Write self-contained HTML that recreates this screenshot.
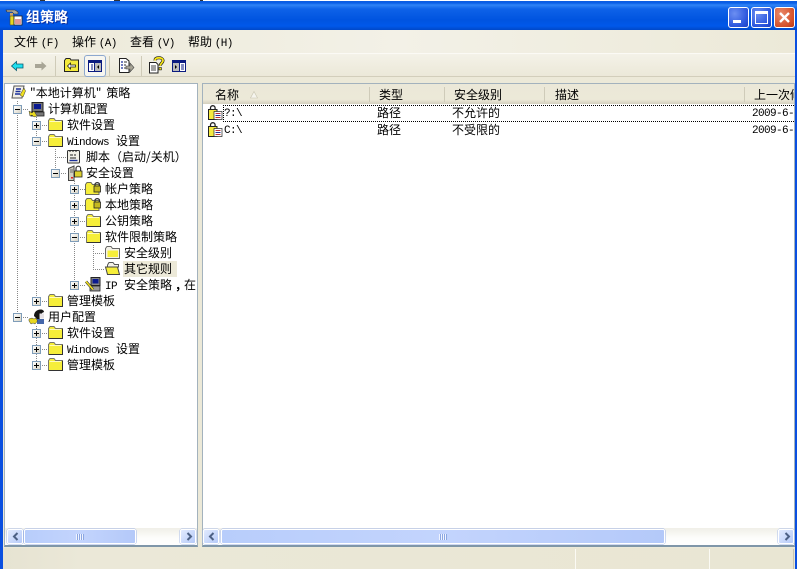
<!DOCTYPE html>
<html><head><meta charset="utf-8">
<style>
html,body{margin:0;padding:0;width:798px;height:569px;overflow:hidden;background:#fff}
*{box-sizing:border-box}
body{position:relative;font:12px/16px "WenQuanYi Zen Hei","Noto Sans CJK SC","Liberation Sans",sans-serif;color:#000;-webkit-font-smoothing:none}
.a{position:absolute}
.t{position:absolute;white-space:nowrap;height:16px;line-height:16px;font-size:12px}
.m{font-family:"Liberation Mono","WenQuanYi Zen Hei",monospace;font-size:11px;letter-spacing:-.6px}
svg{position:absolute;display:block;overflow:visible}
.pm{position:absolute;width:9px;height:9px;border:1px solid #7f9db9;background:linear-gradient(135deg,#fff,#d8d4c6);}
.pm:before{content:"";position:absolute;left:1px;top:3px;width:5px;height:1px;background:#000}
.pm.p:after{content:"";position:absolute;left:3px;top:1px;width:1px;height:5px;background:#000}
.v{position:absolute;width:1px;background:repeating-linear-gradient(to bottom,#888 0 1px,transparent 1px 2px)}
.h{position:absolute;height:1px;background:repeating-linear-gradient(to right,#888 0 1px,transparent 1px 2px)}
.hs{position:absolute;width:1px;top:87px;height:15px;background:#cfcbb9}
.sb{position:absolute;height:17px;background:linear-gradient(#f0efe8,#fdfdfb 60%,#fefefe)}
.btn{position:absolute;top:1px;width:16px;height:15px;background:linear-gradient(135deg,#e1eafe,#b6caf8);border:1px solid #fff;border-radius:2px;box-shadow:0 0 0 .5px #a9bde8}
.th{position:absolute;top:1px;height:15px;background:linear-gradient(90deg,#b8cdfb,#c3d4fd 50%,#b4c9f9);border:1px solid #fff;border-radius:2px;box-shadow:0 0 0 .5px #9db3e6}
.grip{position:absolute;top:4px;width:8px;height:6px;background:repeating-linear-gradient(to right,#f0f4ff 0 1px,#8ca7e2 1px 2px)}
.wb{position:absolute;top:7px;width:21px;height:21px;border:1px solid #fff;border-radius:3px}
</style></head>
<body>
<!-- frame -->
<div class="a" style="left:0;top:1px;width:797px;height:29px;background:linear-gradient(#0a5be0 0,#0a5fe8 2px,#2f83f5 4px,#0e62e8 8px,#0054e0 19px,#0058ea 25px,#0048c8 29px)"></div>
<div class="a" style="left:40px;top:0;width:5px;height:1px;background:#333"></div>
<div class="a" style="left:114px;top:0;width:6px;height:1px;background:#333"></div>
<div class="a" style="left:200px;top:0;width:3px;height:1px;background:#333"></div>
<div class="a" style="left:0;top:30px;width:3px;height:539px;background:#0a4fe0"></div>
<div class="a" style="left:795px;top:30px;width:2px;height:539px;background:#0a4fe0"></div>

<!-- title icon -->
<svg style="left:6px;top:9px" width="18" height="17" viewBox="0 0 18 17">
<path d="M0 1h9l3 2v2H8L6 3H1z" fill="#a8a8a0" stroke="#333" stroke-width=".6"/>
<rect x="4" y="4" width="3" height="6" fill="#caa46a"/>
<rect x="4" y="7" width="4" height="9" fill="#e8d820" stroke="#444" stroke-width=".6"/>
<rect x="8" y="7" width="8" height="9" fill="#fff" stroke="#222" stroke-width=".8"/>
<path d="M10 10v5M12 10v5M14 10v5" stroke="#c03030" stroke-width="1"/>
</svg>
<div class="t" style="left:26px;top:9px;color:#fff;font-weight:bold;font-size:14px;text-shadow:1px 1px 0 #0a2fa0">组策略</div>

<!-- window buttons -->
<div class="wb" style="left:728px;background:radial-gradient(circle at 30% 30%,#6c8ff2,#2a55dc 70%,#1d3fc0)">
  <div class="a" style="left:4px;top:12px;width:8px;height:3px;background:#fff"></div>
</div>
<div class="wb" style="left:751px;background:radial-gradient(circle at 30% 30%,#6c8ff2,#2a55dc 70%,#1d3fc0)">
  <div class="a" style="left:3px;top:3px;width:13px;height:13px;border:1px solid #fff;border-top:3px solid #fff"></div>
</div>
<div class="wb" style="left:774px;background:radial-gradient(circle at 30% 30%,#ea8a6a,#d4502a 70%,#b83a1a)">
  <svg style="left:3px;top:3px" width="13" height="13" viewBox="0 0 13 13"><path d="M2 2l9 9M11 2l-9 9" stroke="#fff" stroke-width="2.4"/></svg>
</div>

<!-- menu -->
<div class="a" style="left:3px;top:30px;width:792px;height:23px;background:linear-gradient(90deg,#ece9d8,#f3f1e7 50%,#ece9d8)"></div>
<div class="a" style="left:3px;top:53px;width:792px;height:1px;background:#fbfaf5"></div>
<div class="t" style="left:14px;top:34px">文件 <span class="m">(F)</span></div>
<div class="t" style="left:72px;top:34px">操作 <span class="m">(A)</span></div>
<div class="t" style="left:130px;top:34px">查看 <span class="m">(V)</span></div>
<div class="t" style="left:188px;top:34px">帮助 <span class="m">(H)</span></div>

<!-- toolbar -->
<div class="a" style="left:3px;top:54px;width:792px;height:23px;background:linear-gradient(#f4f2e8,#ebe8d8)"></div>
<div class="a" style="left:3px;top:76px;width:792px;height:1px;background:#d2cebb"></div>
<div class="a" style="left:55px;top:56px;width:1px;height:20px;background:#cfcbb8"></div>
<div class="a" style="left:141px;top:56px;width:1px;height:20px;background:#cfcbb8"></div>
<div class="a" style="left:109px;top:56px;width:1px;height:20px;background:#cfcbb8"></div>
<svg style="left:11px;top:60px" width="13" height="12" viewBox="0 0 13 12"><path d="M.5 6L5.5 1.500V4H12V8H5.500v2.500z" fill="#1fe0ee" stroke="#0a5a70" stroke-width=".8"/></svg>
<svg style="left:34px;top:60px" width="13" height="12" viewBox="0 0 13 12"><path d="M12.500 6L7.500 1.500V4H1V8H7.500v2.500z" fill="#a8a596"/></svg>
<svg style="left:64px;top:57px" width="15" height="16" viewBox="0 0 15 16"><path d="M.5 3.500L2 1.500H6L7 3H14.500V14.500H.5z" fill="#f4ea3c" stroke="#222"/><path d="M3.500 9L6.500 6v2h5v2H6.500v2z" fill="#fff" stroke="#111" stroke-width=".7"/></svg>
<div class="a" style="left:84px;top:55px;width:22px;height:22px;border:1px solid #8da8cf;border-radius:3px;background:#f7f6f0"></div>
<svg style="left:88px;top:60px" width="14" height="12" viewBox="0 0 14 12"><rect x=".5" y=".5" width="13" height="11" fill="#fff" stroke="#0a1a80"/><rect x="1" y="1" width="12" height="2" fill="#0a1a80"/><rect x="7" y="3" width="6" height="8" fill="#bbb"/><path d="M6.500 1v10" stroke="#0a1a80"/><path d="M3 5h2M3 7h2M3 9h2" stroke="#0a1a80"/><path d="M11 5v4L9 7z" fill="#000"/></svg>
<svg style="left:119px;top:58px" width="15" height="16" viewBox="0 0 15 16"><path d="M.5.5H7L10 3V14.500H.5z" fill="#fff" stroke="#222"/><path d="M2 4h2M2 7h2M2 10h2" stroke="#1a2f9a" stroke-width="1.200"/><path d="M5 4h3M5 7h2M5 10h2" stroke="#333"/><path d="M7 8h4V5l4 4.500-4 4.500v-3H7z" fill="#a8a596" stroke="#444" stroke-width=".6"/></svg>
<svg style="left:149px;top:57px" width="15" height="17" viewBox="0 0 15 17"><path d="M.5 5.500H7L9 7.500V16H.5z" fill="#fff" stroke="#222"/><path d="M2 9h5M2 11h5M2 13h5" stroke="#444"/><path d="M6 3.500C6 1.500 7.800.8 10 .8s4 1 4 3c0 2-2.800 2.500-2.800 5" fill="none" stroke="#111" stroke-width="3"/><path d="M6 3.500C6 1.500 7.800.8 10 .8s4 1 4 3c0 2-2.800 2.500-2.800 5" fill="none" stroke="#f6e51a" stroke-width="1.800"/><rect x="10" y="10.500" width="2.400" height="2.400" fill="#f6e51a" stroke="#111" stroke-width=".6"/></svg>
<svg style="left:172px;top:60px" width="14" height="12" viewBox="0 0 14 12"><rect x=".5" y=".5" width="13" height="11" fill="#fff" stroke="#0a1a80"/><rect x="1" y="1" width="12" height="2" fill="#0a1a80"/><rect x="1" y="3" width="6" height="8" fill="#bbb"/><path d="M7.500 1v10" stroke="#0a1a80"/><path d="M9 5h3M9 7h3M9 9h3" stroke="#0a1a80"/><path d="M3 5v4l2-2z" fill="#000"/></svg>

<!-- pane area -->
<div class="a" style="left:3px;top:77px;width:792px;height:471px;background:#ece9d8"></div>
<div class="a" style="left:4px;top:83px;width:194px;height:464px;background:#fff;border:1px solid #a3b2bd;border-bottom:2px solid #7f96a8"></div>
<div class="a" style="left:202px;top:83px;width:593px;height:464px;background:#fff;border:1px solid #a3b2bd;border-bottom:2px solid #7f96a8"></div>

<!-- list header -->
<div class="a" style="left:203px;top:84px;width:591px;height:20px;background:linear-gradient(#ebe8d8,#ece9d8 78%,#d4d0be)"></div>
<div class="hs" style="left:369px"></div><div class="hs" style="left:444px"></div><div class="hs" style="left:544px"></div><div class="hs" style="left:744px"></div>
<div class="t" style="left:215px;top:87px">名称</div>
<svg style="left:250px;top:91px" width="8" height="8" viewBox="0 0 8 8"><path d="M4 .5L7.500 7H.5z" fill="#f6f5ee" stroke="#c8c4b0" stroke-width=".6"/></svg>
<div class="t" style="left:379px;top:87px">类型</div>
<div class="t" style="left:454px;top:87px">安全级别</div>
<div class="t" style="left:555px;top:87px">描述</div>
<div class="a" style="left:754px;top:87px;width:40px;height:16px;overflow:hidden"><div class="t" style="left:0;top:0">上一次修改</div></div>

<!-- list rows -->
<div class="a" style="left:223px;top:105px;width:571px;height:17px;border-top:1px dotted #000;border-bottom:1px dotted #000;border-left:1px dotted #000"></div>
<svg style="left:208px;top:105px" width="15" height="15" viewBox="0 0 15 15"><path d="M.5 4.500H9V14.500H.5z" fill="#f5ea40" stroke="#222"/><path d="M2.500 4.500V3a2.300 2.300 0 0 1 4.600 0v1.500" fill="none" stroke="#222" stroke-width="1.300"/><rect x="6" y="6.500" width="8" height="8" fill="#fff" stroke="#222" stroke-width=".7"/><path d="M7.500 8.500h5" stroke="#c03030"/><path d="M7.500 10.500h5" stroke="#1a2f9a"/><path d="M7.500 12.500h5" stroke="#c03030"/></svg>
<svg style="left:208px;top:122px" width="15" height="15" viewBox="0 0 15 15"><path d="M.5 4.500H9V14.500H.5z" fill="#f5ea40" stroke="#222"/><path d="M2.500 4.500V3a2.300 2.300 0 0 1 4.600 0v1.500" fill="none" stroke="#222" stroke-width="1.300"/><rect x="6" y="6.500" width="8" height="8" fill="#fff" stroke="#222" stroke-width=".7"/><path d="M7.500 8.500h5" stroke="#c03030"/><path d="M7.500 10.500h5" stroke="#1a2f9a"/><path d="M7.500 12.500h5" stroke="#c03030"/></svg>
<div class="t m" style="left:224px;top:106px">?:\</div>
<div class="t m" style="left:224px;top:123px">C:\</div>
<div class="t" style="left:377px;top:105px">路径</div><div class="t" style="left:377px;top:122px">路径</div>
<div class="t" style="left:452px;top:105px">不允许的</div><div class="t" style="left:452px;top:122px">不受限的</div>
<div class="a" style="left:752px;top:106px;width:42px;height:16px;overflow:hidden"><div class="t m" style="left:0;top:0">2009-6-30</div></div>
<div class="a" style="left:752px;top:123px;width:42px;height:16px;overflow:hidden"><div class="t m" style="left:0;top:0">2009-6-30</div></div>

<!-- tree lines & expanders -->
<div class="a" style="left:0;top:1px;width:200px;height:400px">
<div class="v" style="left:17px;top:100px;height:217px"></div>
<div class="v" style="left:36px;top:116px;height:185px"></div>
<div class="v" style="left:36px;top:325px;height:40px"></div>
<div class="v" style="left:55px;top:148px;height:25px"></div>
<div class="v" style="left:74px;top:180px;height:105px"></div>
<div class="v" style="left:93px;top:244px;height:25px"></div>
<div class="h" style="left:21px;top:108px;width:8px"></div>
<div class="h" style="left:21px;top:316px;width:8px"></div>
<div class="h" style="left:40px;top:124px;width:8px"></div>
<div class="h" style="left:40px;top:140px;width:8px"></div>
<div class="h" style="left:40px;top:300px;width:8px"></div>
<div class="h" style="left:40px;top:332px;width:8px"></div>
<div class="h" style="left:40px;top:348px;width:8px"></div>
<div class="h" style="left:40px;top:364px;width:8px"></div>
<div class="h" style="left:55px;top:156px;width:11px"></div>
<div class="h" style="left:59px;top:172px;width:8px"></div>
<div class="h" style="left:78px;top:188px;width:8px"></div>
<div class="h" style="left:78px;top:204px;width:8px"></div>
<div class="h" style="left:78px;top:220px;width:8px"></div>
<div class="h" style="left:78px;top:236px;width:8px"></div>
<div class="h" style="left:78px;top:284px;width:8px"></div>
<div class="h" style="left:93px;top:252px;width:11px"></div>
<div class="h" style="left:93px;top:268px;width:11px"></div>
<div class="pm" style="left:13px;top:104px"></div>
<div class="pm p" style="left:32px;top:120px"></div>
<div class="pm" style="left:32px;top:136px"></div>
<div class="pm" style="left:51px;top:168px"></div>
<div class="pm p" style="left:70px;top:184px"></div>
<div class="pm p" style="left:70px;top:200px"></div>
<div class="pm p" style="left:70px;top:216px"></div>
<div class="pm" style="left:70px;top:232px"></div>
<div class="pm p" style="left:70px;top:280px"></div>
<div class="pm p" style="left:32px;top:296px"></div>
<div class="pm" style="left:13px;top:312px"></div>
<div class="pm p" style="left:32px;top:328px"></div>
<div class="pm p" style="left:32px;top:344px"></div>
<div class="pm p" style="left:32px;top:360px"></div>
</div>

<!-- tree icons -->
<svg width="0" height="0" style="position:absolute"><defs>
<symbol id="f" viewBox="0 0 15 13"><path d="M.5 2.500L2 .5H6L7.500 2.500H14.500V12.500H.5z" fill="#f6ee3a" stroke="#77776a"/><path d="M1.500 3.500H13" stroke="#fffbc0"/><path d="M14.500 3V12.500H1" fill="none" stroke="#333"/></symbol>
<symbol id="g" viewBox="0 0 15 13"><path d="M.5 2.500L2 .5H6L7.500 2.500H14.500V12.500H.5z" fill="#f4f2e8" stroke="#666"/><path d="M2.500 4.500H13V11H2.500z" fill="#f6ee3a"/></symbol>
<symbol id="l" viewBox="0 0 16 14"><path d="M.5 3.500L2 1.500H6L7.500 3.500H14V13.500H.5z" fill="#f6ee3a" stroke="#6a6a5a"/><path d="M10 5V3a2.500 2.500 0 0 1 4.500 0v2" fill="none" stroke="#333" stroke-width="1.200"/><rect x="9" y="5" width="6.500" height="6" fill="#c4b820" stroke="#222" stroke-width=".8"/></symbol>
</defs></svg>
<!-- root scroll -->
<svg style="left:11px;top:85px" width="15" height="15" viewBox="0 0 15 15"><path d="M3 1H13L11 13H1z" fill="#f2f0e8" stroke="#555"/><path d="M5 4h5M4.500 6.500h5M4 9h5" stroke="#1a2f9a" stroke-width="1.400"/><path d="M9 10l4-7 1.500 3-2.500 6z" fill="#f0e020" stroke="#333" stroke-width=".5"/></svg>
<!-- computer -->
<svg style="left:29px;top:102px" width="16" height="15" viewBox="0 0 16 15"><rect x="3" y=".5" width="11" height="9" fill="#777" stroke="#222"/><rect x="5" y="2" width="7" height="5" fill="#0a1a90"/><rect x="2" y="10" width="13" height="4" fill="#777" stroke="#222" stroke-width=".8"/><path d="M0 9l3 2 2-2 3 5-3 1-2-2-2 1z" fill="#e8d820" stroke="#333" stroke-width=".5"/></svg>
<svg style="left:48px;top:118px" width="15" height="13"><use href="#f" width="15" height="13"/></svg>
<svg style="left:48px;top:134px" width="15" height="13"><use href="#f" width="15" height="13"/></svg>
<!-- script -->
<svg style="left:66px;top:149px" width="15" height="15" viewBox="0 0 15 15"><rect x="1.500" y="1.500" width="12" height="12.500" rx="1" fill="#f2f0e6" stroke="#333"/><path d="M4 1v2M7 1v2M10 1v2" stroke="#222"/><path d="M4 6h3M8 6h2M4 9h6" stroke="#222"/><path d="M3.500 11.500h8" stroke="#1a2f9a" stroke-width="1.400"/></svg>
<!-- security -->
<svg style="left:68px;top:165px" width="15" height="16" viewBox="0 0 15 16"><path d="M.5 3.500L6 1V15.500H.5z" fill="#d4d0c4" stroke="#444"/><path d="M2 5h3M2 7h3" stroke="#666"/><rect x="3" y="12" width="2" height="1.500" fill="#e02020"/><path d="M8 6V3.500a2.300 2.300 0 0 1 4.600 0V6" fill="none" stroke="#333" stroke-width="1.200"/><rect x="6.500" y="6" width="7.500" height="6" fill="#dcd030" stroke="#222" stroke-width=".8"/></svg>
<svg style="left:85px;top:181px" width="16" height="14"><use href="#l" width="16" height="14"/></svg>
<svg style="left:85px;top:197px" width="16" height="14"><use href="#l" width="16" height="14"/></svg>
<svg style="left:86px;top:214px" width="15" height="13"><use href="#f" width="15" height="13"/></svg>
<svg style="left:86px;top:230px" width="15" height="13"><use href="#f" width="15" height="13"/></svg>
<svg style="left:105px;top:246px" width="15" height="13"><use href="#g" width="15" height="13"/></svg>
<svg style="left:105px;top:262px" width="15" height="13" viewBox="0 0 15 13"><path d="M2.500 3L4 .5H8L9.500 2.500H13.500V5H2.500z" fill="#f4f2e8" stroke="#555"/><path d="M.5 5H12.500L14.500 12.500H2.500z" fill="#f6ee3a" stroke="#444"/></svg>
<!-- IP -->
<svg style="left:85px;top:277px" width="16" height="16" viewBox="0 0 16 16"><rect x="6" y=".5" width="9" height="8" fill="#888" stroke="#222"/><rect x="7.500" y="2" width="6" height="4.500" fill="#0a1a90"/><rect x="5" y="9" width="10" height="5" fill="#999" stroke="#222" stroke-width=".8"/><path d="M1 4.500l7 8" stroke="#333" stroke-width="2.800"/><path d="M1 4.500l7 8" stroke="#f0e020" stroke-width="1.600"/></svg>
<svg style="left:48px;top:294px" width="15" height="13"><use href="#f" width="15" height="13"/></svg>
<!-- user -->
<svg style="left:29px;top:309px" width="16" height="16" viewBox="0 0 16 16"><path d="M5 7c0-4 3-6.500 6.500-6.500 2 0 3.500 1 3.500 2.500l-2 1v4L9 11z" fill="#151515"/><rect x="10.500" y="4.500" width="4.500" height="5" fill="#e6e2e6"/><rect x="8" y="10" width="7" height="5" fill="#46a"/><path d="M0 10l3-1 2 1 2-1 1.500 3-2.500 3-2-1-2 1-2-3z" fill="#e8d820" stroke="#333" stroke-width=".5"/></svg>
<svg style="left:48px;top:326px" width="15" height="13"><use href="#f" width="15" height="13"/></svg>
<svg style="left:48px;top:342px" width="15" height="13"><use href="#f" width="15" height="13"/></svg>
<svg style="left:48px;top:358px" width="15" height="13"><use href="#f" width="15" height="13"/></svg>

<!-- tree text -->
<div class="t" style="left:30px;top:85px">"本地计算机"<span style="margin-left:5px">策略</span></div>
<div class="t" style="left:48px;top:101px">计算机配置</div>
<div class="t" style="left:67px;top:117px">软件设置</div>
<div class="t" style="left:67px;top:133px"><span class="m">Windows</span><span style="margin-left:7px">设置</span></div>
<div class="t" style="left:86px;top:149px">脚本（启动/关机）</div>
<div class="t" style="left:86px;top:165px">安全设置</div>
<div class="t" style="left:105px;top:181px">帐户策略</div>
<div class="t" style="left:105px;top:197px">本地策略</div>
<div class="t" style="left:105px;top:213px">公钥策略</div>
<div class="t" style="left:105px;top:229px">软件限制策略</div>
<div class="t" style="left:124px;top:245px">安全级别</div>
<div class="a" style="left:123px;top:261px;width:54px;height:16px;background:#ece9d8"></div>
<div class="t" style="left:124px;top:261px">其它规则</div>
<div class="a" style="left:105px;top:277px;width:91px;height:16px;overflow:hidden"><div class="t" style="left:0;top:0"><span class="m">IP</span><span style="margin-left:7px">安全策略</span><span style="display:inline-block;width:12px;text-align:center;font-weight:bold">,</span>在</div></div>
<div class="t" style="left:67px;top:293px">管理模板</div>
<div class="t" style="left:48px;top:309px">用户配置</div>
<div class="t" style="left:67px;top:325px">软件设置</div>
<div class="t" style="left:67px;top:341px"><span class="m">Windows</span><span style="margin-left:7px">设置</span></div>
<div class="t" style="left:67px;top:357px">管理模板</div>

<!-- scrollbars -->
<div class="sb" style="left:5px;top:528px;width:192px">
  <div class="btn" style="left:2px"><svg style="left:4px;top:2px" width="7" height="9" viewBox="0 0 7 9"><path d="M5.500 1L2 4.500 5.500 8" fill="none" stroke="#4d6185" stroke-width="2"/></svg></div>
  <div class="th" style="left:19px;width:112px"><div class="grip" style="left:51px"></div></div>
  <div class="btn" style="left:175px"><svg style="left:5px;top:2px" width="7" height="9" viewBox="0 0 7 9"><path d="M1.500 1L5 4.500 1.500 8" fill="none" stroke="#4d6185" stroke-width="2"/></svg></div>
</div>
<div class="sb" style="left:203px;top:528px;width:591px">
  <div class="btn" style="left:0"><svg style="left:4px;top:2px" width="7" height="9" viewBox="0 0 7 9"><path d="M5.500 1L2 4.500 5.500 8" fill="none" stroke="#4d6185" stroke-width="2"/></svg></div>
  <div class="th" style="left:18px;width:444px"><div class="grip" style="left:217px"></div></div>
  <div class="btn" style="left:575px"><svg style="left:5px;top:2px" width="7" height="9" viewBox="0 0 7 9"><path d="M1.500 1L5 4.500 1.500 8" fill="none" stroke="#4d6185" stroke-width="2"/></svg></div>
</div>

<!-- status bar -->
<div class="a" style="left:3px;top:548px;width:792px;height:21px;background:linear-gradient(90deg,#e6e3d2,#ebe8d8 10%,#e9e6d3)"></div>
<div class="a" style="left:575px;top:549px;width:1px;height:20px;background:#fbfaf4"></div>
<div class="a" style="left:709px;top:549px;width:1px;height:20px;background:#fbfaf4"></div>
<div class="a" style="left:793px;top:549px;width:1px;height:20px;background:#c9c5b2"></div>
</body></html>
